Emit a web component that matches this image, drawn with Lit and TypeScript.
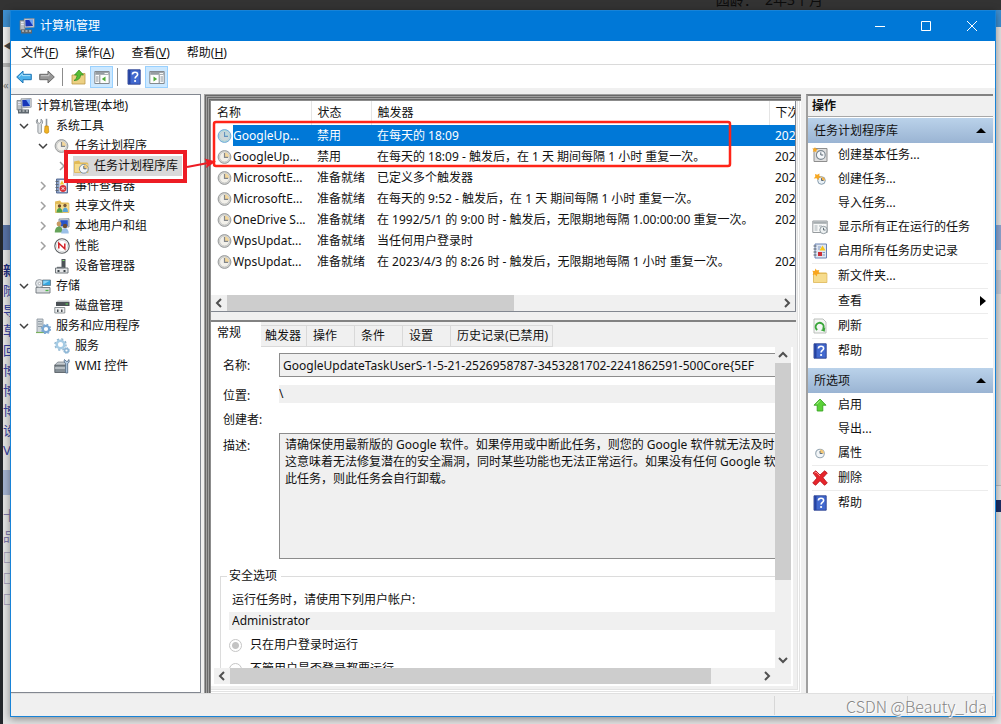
import { LitElement, html, css, svg, nothing, TemplateResult } from "lit";
import { customElement, property, state } from "lit/decorators.js";
import { classMap } from "lit/directives/class-map.js";
import { styleMap } from "lit/directives/style-map.js";

const clockFace = svg`
  <circle cx="7.500" cy="8" r="6.400" fill="#d4d5d4" stroke="#999b9b" stroke-width="1"/>
  <circle cx="7.500" cy="8" r="4.900" fill="#f2f0ea" stroke="#bfc0bd" stroke-width=".7"/>
  <path d="M7.500 8V3.500A4.500 4.500 0 0 1 12 8Z" fill="#f3d79b"/>
  <path d="M7.500 4V8.300h3.600" fill="none" stroke="#83868a" stroke-width="1.200"/>`;

const smallClock = svg`
  <circle cx="10.8" cy="10.8" r="4.4" fill="#f4f6f8" stroke="#7d93a5"/>
  <path d="M10.8 10.8V6.8a4 4 0 0 1 4 4Z" fill="#f5ca74"/>
  <path d="M10.8 8v2.8h2.5" fill="none" stroke="#56687a"/>`;

const star = svg`<path d="M3.5.5l1.3 2.1L7.4 2 6.3 4.2 8 6 5.4 6.1 4.6 8.400 3 6.500.6 7l1-2.300L.2 2.800l2.500.1Z" fill="#f9a51c"/>`;

const folderBody = svg`
  <path d="M1 3.500 6 2.500 7.500 4.500H14.500V14.500L1.500 14.500Z" fill="#e3bb55"/>
  <path d="M1.500 5.500H15V14.500H1.500Z" fill="#f6dc8d" stroke="#d8b04e" stroke-width=".6"/>`;

const ICONS: Record<string, TemplateResult> = {
  computer: svg`
    <path d="M1 2.500h5V12H1Z" fill="#b9bec2" stroke="#6f767c" stroke-width=".7"/>
    <path d="M2 4.500h3M2 6.500h3" stroke="#eef" stroke-width=".8"/>
    <path d="M5 .8 15.200.5V9.200L5.500 9.800Z" fill="#d6dadd" stroke="#7c848c" stroke-width=".7"/>
    <path d="M6.300 1.900 14 1.700V8L6.500 8.500Z" fill="#1736b8"/>
    <path d="M10 1.800 14 1.700V8Z" fill="#6fa4f2"/>
    <path d="M2 11.500h11v4H2Z" fill="#5e676e"/>
    <path d="M3 13h2m1.500 0h2m1.500 0h2" stroke="#e6e9eb"/>`,
  tools: svg`
    <path d="M2.500 1.200v3l1.700 1.300L6 4.200v-3c2 1 2.200 4 .4 5.200V14.500c-.8 1.200-2.800 1.200-3.500 0V6.400C.9 5 1 2 2.500 1.200Z" fill="#dfe2e4" stroke="#7b8287" stroke-width=".8"/>
    <path d="M11.500.800V8" stroke="#8f979d" stroke-width="1.600"/>
    <path d="M10 8h3.200l.6 6c-.5 1.700-3.700 1.700-4.300 0Z" fill="#f0b323" stroke="#c78a13" stroke-width=".7"/>`,
  clock: clockFace,
  folderClock: svg`${folderBody}${smallClock}`,
  event: svg`
    <path d="M2.500 1h11v14h-11Z" fill="#8ba0c4" stroke="#4d638f" stroke-width=".9"/>
    <path d="M5.500 2h7v12h-7Z" fill="#f2f5fa"/>
    <path d="M1.500 3.500h3M1.500 6.500h3M1.500 9.500h3M1.500 12.500h3" stroke="#5f6770"/>
    <path d="M8 2.500l2.200 4H5.800Z" fill="#f5c938"/>
    <circle cx="9" cy="10.500" r="3.400" fill="#d8343a"/><path d="M7.700 9.200l2.600 2.600m0-2.600-2.600 2.600" stroke="#fff"/>`,
  share: svg`${folderBody}
    <circle cx="5.500" cy="8" r="1.700" fill="#6c4a2b"/><path d="M2.500 14.500c0-6 6-6 6 0Z" fill="#4fa04c"/>
    <circle cx="11" cy="7.500" r="1.700" fill="#7a5936"/><path d="M8.500 14c0-6 5.500-6 5.500 0Z" fill="#5aa6d8"/>`,
  users: svg`
    <path d="M5 1 15 .7V9H5Z" fill="#cfd6dc" stroke="#77828d" stroke-width=".8"/><path d="M6.300 2.200h7.500V8H6.300Z" fill="#2855c9"/>
    <circle cx="5" cy="6" r="2.400" fill="#c99a62"/><path d="M.8 14.500c0-8 8.200-8 8.200 0Z" fill="#65a35a"/>
    <circle cx="11" cy="8" r="2.200" fill="#6e4d31"/><path d="M7.200 15.500c0-7.500 7.600-7.500 7.600 0Z" fill="#9cc0e8"/>`,
  perf: svg`
    <circle cx="8" cy="8" r="7.200" fill="#fff" stroke="#5b5f62" stroke-width="1.100"/>
    <circle cx="8" cy="8" r="5.600" fill="none" stroke="#c7cacc" stroke-width=".7"/>
    <path d="M4.800 10.500V5.200l6 5.600V5.500" fill="none" stroke="#d42127" stroke-width="1.500"/>`,
  device: svg`
    <path d="M7.500 1h4v9h-4Z" fill="#4c5357"/><path d="M8.500 2.500h2" stroke="#7ee06d"/>
    <path d="M1.500 10h12.500v5H1.500Z" fill="#e3e5e7" stroke="#666d72" stroke-width=".9"/>
    <path d="M3.500 12h2v2h-2zm6 0h2v2h-2z" fill="#3f464a"/><path d="M3 9.500h7" stroke="#6b7277" stroke-width="1.400"/>`,
  storage: svg`
    <path d="M1 9.500h14V15H1Z" fill="#d9dcde" stroke="#6d757b" stroke-width=".9"/><path d="M10.500 12.500h3" stroke="#50b74b" stroke-width="1.300"/>
    <circle cx="4.500" cy="5.500" r="4" fill="#dfe3e6" stroke="#868d93" stroke-width=".8"/><circle cx="4.500" cy="5.500" r="1.200" fill="#fff" stroke="#868d93" stroke-width=".6"/>
    <path d="M7.500 2h8v5.500h-8Z" fill="#35a5de" stroke="#6b7780" stroke-width=".8"/>
    <path d="M8.300 2.800h6.400L8.300 6.500Z" fill="#8bd4f5"/>`,
  disk: svg`
    <path d="M2 4h13.500v4H2Z" fill="#4b5156"/><path d="M2 4l2-1.500h11.500V4Z" fill="#c3c7ca"/><path d="M11.500 6h2.500" stroke="#62dd58"/>
    <path d="M.8 9.500h10v5.500h-10Z" fill="#eceeef" stroke="#747b80" stroke-width=".8"/><path d="M3 11.500h1.500V14H3zm4 0h1.500V14H7z" fill="#4b5156"/>`,
  services: svg`
    <path d="M2 1h6v13.500H2Z" fill="#d0d6da" stroke="#87919a" stroke-width=".8"/><path d="M3 3.500h4M3 6h4M3 8.500h4" stroke="#8f9ba5"/><path d="M1 14.500h8" stroke="#78b05c" stroke-width="1.200"/>
    <circle cx="11" cy="11" r="3.200" fill="none" stroke="#79a7d3" stroke-width="2.200"/><circle cx="11" cy="11" r="4.600" fill="none" stroke="#79a7d3" stroke-width="1.200" stroke-dasharray="1.800 1.810"/>`,
  gears: svg`
    <circle cx="6.500" cy="6.500" r="3.800" fill="none" stroke="#a5cbe4" stroke-width="2.600"/><circle cx="6.500" cy="6.500" r="5.600" fill="none" stroke="#8db4cf" stroke-width="1.300" stroke-dasharray="2.200 2.200"/>
    <circle cx="12.500" cy="12.500" r="1.900" fill="none" stroke="#8fb7d6" stroke-width="1.600"/><circle cx="12.500" cy="12.500" r="3" fill="none" stroke="#8fb7d6" stroke-dasharray="1.200 1.150"/>`,
  wmi: svg`
    <path d="M.8 7h12v7.500H.8Z" fill="#858f96" stroke="#4e565c" stroke-width=".8"/><path d="M.8 7l3-3h9.500v3Z" fill="#c4cacf" stroke="#5e676d" stroke-width=".6"/><path d="M1 10h10" stroke="#e8ecef"/>
    <path d="M10.500 1.500c-1 2 .2 3.500 1.200 3.900V15h2V5.400c1.400-.4 2-2.200 1.100-3.900l-.9 1.800h-1.600Z" fill="#b9d1e8" stroke="#4c6580" stroke-width=".8"/>`,
  back: svg`<path d="M.7 8 7 2v3.300h8.300v5.400H7V14Z" fill="#4db1ea" stroke="#1f76b6"/><path d="M3 7.800 6.300 4.600v2h8" fill="none" stroke="#a9e0fb"/>`,
  forward: svg`<path d="M15.300 8 9 2v3.300H.7v5.400H9V14Z" fill="#989898" stroke="#6a6a6a"/><path d="M2 6.700h8v-2" fill="none" stroke="#cdcdcd"/>`,
  upFolder: svg`<path d="M1 6h4l1-1.500h8V15H1Z" fill="#ecd083" stroke="#bd9a46" stroke-width=".8"/><path d="M3 11.500c2-1 3-3 3-5.500H3.500L8 1l4.500 5H9.500C9.500 9.500 7 11.500 3 11.500Z" fill="#57bd35" stroke="#2d8a1c" stroke-width=".7"/>`,
  paneLeft: svg`<path d="M.8 2.500h14.400v12H.8Z" fill="#fdfdfd" stroke="#83898e"/><path d="M1.300 3h13.400v2.800H1.300Z" fill="#969da2"/><path d="M10.500 4.400h3.500" stroke="#fff"/><path d="M5.800 6v8.500" stroke="#83898e"/><path d="M2 8h2.500M2 10h2.500M2 12h2.500" stroke="#87939b"/><path d="M11.500 7.500v5L7.800 10Z" fill="#4eab37"/>`,
  paneRight: svg`<path d="M.8 2.500h14.400v12H.8Z" fill="#fdfdfd" stroke="#83898e"/><path d="M1.300 3h13.400v2.800H1.300Z" fill="#969da2"/><path d="M10.500 4.400h3.500" stroke="#fff"/><path d="M10.200 6v8.500" stroke="#83898e"/><path d="M11.500 8h2.500M11.500 10h2.500M11.500 12h2.500" stroke="#87939b"/><path d="M4.500 7.500v5L8.200 10Z" fill="#4eab37"/>`,
  help: svg`<path d="M2 .8h12.200v14.400H2Z" fill="#4269cf" stroke="#2a3f8e" stroke-width=".9"/><path d="M2.500 1h2v14h-2Z" fill="#26439f"/><path d="M6.400 5.600c0-3.300 5.200-3.100 5.200-.2 0 2-2.500 2-2.500 4" fill="none" stroke="#fff" stroke-width="1.600"/><circle cx="9.100" cy="12" r="1.100" fill="#fff"/>`,
  basicTask: svg`<path d="M2 1.500h13v13H2Z" fill="#dedede" stroke="#8e8e8e"/><circle cx="8.800" cy="8" r="4.400" fill="#f6f8fa" stroke="#7b8790" stroke-width="1.100"/><path d="M8.800 5.300V8h2.400" fill="none" stroke="#5b6874"/><path d="M3 0l.8 1.800L6 2.200 4.300 3.500l.2 2L2.800 4.300.8 5l.7-2L.2 1.400l2 .2Z" fill="#f7a823"/>`,
  newTask: svg`<circle cx="9.500" cy="9.500" r="3.800" fill="#e8f0f6" stroke="#7d93a5" stroke-width=".9"/><path d="M9.500 9.500V6a3.500 3.500 0 0 1 3.500 3.500Z" fill="#f1b24b"/><path d="M9.500 7.200v2.300h2" fill="none" stroke="#56687a"/><path d="M3 3l2.200.7L7.500 2.500 7.300 4.800 9.500 6l-2.600.7-.7 2.600-1.700-2-2.700.3 1.500-2.200Z" fill="#f7a823"/>`,
  running: svg`<path d="M.8 2h14.400v11.500H.8Z" fill="#f7f8f8" stroke="#969b9e"/><path d="M1.200 2.500h13.600v2.300H1.200Z" fill="#a7adb0"/><path d="M2.500 7h3M2.500 9h3M2.500 11h3M7 7h3" stroke="#a8b1b6"/><circle cx="11.500" cy="11" r="3.700" fill="#edf1f2" stroke="#889298" stroke-width=".9"/><path d="M11.500 8.800V11h2" fill="none" stroke="#647079"/>`,
  history: svg`<path d="M3 1h11.500v14H3Z" fill="#dfe7f3" stroke="#6a83b3"/><path d="M1.500 3h3M1.500 6h3M1.500 9h3M1.500 12h3" stroke="#596068"/><path d="M6 4h3M6 6h2" stroke="#8298be"/><path d="M10.500 2.500l3 5h-6Z" fill="#f7c71d"/><path d="M6 9h4v4H6Z" fill="#cc3038"/><path d="M10.500 9.500H13M10.500 12H13" stroke="#8298be"/>`,
  newFolder: svg`${folderBody}${star}`,
  refresh: svg`<path d="M2 1h9l3 3v11H2Z" fill="#f4f6f4" stroke="#b3b8b3" stroke-width=".9"/><path d="M5.200 12A4 4 0 1 1 11 11" fill="none" stroke="#3aa63a" stroke-width="2"/><path d="M13.300 9.500l-.6 4.300-4-1.600Z" fill="#3aa63a"/>`,
  up: svg`<path d="M8 2 14 8.200h-3.200V14H5.200V8.200H2Z" fill="#5bd238" stroke="#38a421" stroke-width=".9"/><path d="M4.500 7.300 8 3.600" stroke="#b0f297"/>`,
  props: svg`<circle cx="8" cy="8.500" r="4.300" fill="#f2f5f7" stroke="#98a8b4" stroke-width="1.100"/><path d="M8 8.500V4.500a4 4 0 0 1 4 4Z" fill="#f4c877"/><path d="M8 6v2.500h2.500" fill="none" stroke="#61727f"/>`,
  remove: svg`<path d="M1 3 3.800.8 8 5 12.600.8 15.300 3 11 7.700 15.300 13 12.500 15.300 8 10.700 3.600 15.300.7 13 5 8Z" fill="#e6252b" stroke="#b51219" stroke-width=".8"/><path d="M2.500 3 4 2l4 4" fill="none" stroke="#f78d8d"/>`,
};

const icon = (name: string) =>
  name
    ? html`<svg class="ico" viewBox="0 0 16 16" width="16" height="16" aria-hidden="true">${ICONS[name]}</svg>`
    : html`<span class="ico"></span>`;

const shared = css`
  * { box-sizing: border-box; }
  button, input, textarea, fieldset { font: inherit; color: inherit; margin: 0; border-radius: 0; }
  button { background: none; border: 0; padding: 0; text-align: left; }
  svg { display: block; flex: none; }
  .ico { width: 16px; height: 16px; flex: none; }
`;

const ARROWS: Record<string, string> = {
  left: "M10 4 6 8l4 4",
  right: "M6 4l4 4-4 4",
  up: "M4 10l4-4 4 4",
  down: "M4 6l4 4 4-4",
};
const arrow = (dir: string) => html`
  <svg viewBox="0 0 16 16" width="16" height="16" aria-hidden="true">
    <path d=${ARROWS[dir]} fill="none" stroke="#505050" stroke-width="2"/>
  </svg>`;

@customElement("scroll-bar")
class ScrollBar extends LitElement {
  @property({ type: Boolean, reflect: true }) vertical = false;
  @property({ type: Number }) size = 50;
  static styles = [shared, css`
    :host { display: flex; background: #f0f0f0; height: 16px; min-width: 0; }
    :host([vertical]) { flex-direction: column; height: auto; width: 16px; min-height: 0; }
    .track { flex: 1; min-width: 0; min-height: 0; }
    .thumb { background: #cdcdcd; height: 100%; width: 100%; }
  `];
  render() {
    const pct = `${this.size}%`;
    return html`
      <button aria-label="向前滚动">${arrow(this.vertical ? "up" : "left")}</button>
      <div class="track"><div class="thumb" style=${styleMap(this.vertical ? { height: pct } : { width: pct })}></div></div>
      <button aria-label="向后滚动">${arrow(this.vertical ? "down" : "right")}</button>`;
  }
}

type Node = { level: number; icon: string; text: string; open?: boolean; selected?: boolean };
const TREE: Node[] = [
  { level: 0, icon: "computer", text: "计算机管理(本地)" },
  { level: 1, icon: "tools", text: "系统工具", open: true },
  { level: 2, icon: "clock", text: "任务计划程序", open: true },
  { level: 3, icon: "folderClock", text: "任务计划程序库", open: false, selected: true },
  { level: 2, icon: "event", text: "事件查看器", open: false },
  { level: 2, icon: "share", text: "共享文件夹", open: false },
  { level: 2, icon: "users", text: "本地用户和组", open: false },
  { level: 2, icon: "perf", text: "性能", open: false },
  { level: 2, icon: "device", text: "设备管理器" },
  { level: 1, icon: "storage", text: "存储", open: true },
  { level: 2, icon: "disk", text: "磁盘管理" },
  { level: 1, icon: "services", text: "服务和应用程序", open: true },
  { level: 2, icon: "gears", text: "服务" },
  { level: 2, icon: "wmi", text: "WMI 控件" },
];

@customElement("console-tree")
class ConsoleTree extends LitElement {
  static styles = [shared, css`
    :host { display: block; background: #fff; border: 1px solid #828790; border-left: 0; overflow: hidden; }
    ul { list-style: none; margin: 0; padding: 1px 0 0; }
    li { display: flex; align-items: center; height: 20px; padding-left: 5px; white-space: nowrap; }
    .indent { flex: none; }
    .twist { width: 19px; flex: none; }
    .node { display: flex; align-items: center; gap: 5px; height: 20px; }
    .selected { background: #d9d9d9; padding-right: 4px; }
  `];
  render() {
    return html`<ul role="tree">${TREE.map((n) => html`
      <li role="treeitem" aria-level=${n.level + 1}>
        <span class="indent" style=${styleMap({ width: `${Math.max(0, n.level - 1) * 19}px` })}></span>
        ${n.level ? html`<span class="twist">${n.open === undefined ? nothing : html`
          <svg width="16" height="16" viewBox="0 0 16 16"><path fill="none" stroke-width="1.500"
            stroke=${n.open ? "#404040" : "#a0a0a0"} d=${n.open ? "M4 6l4 4 4-4" : "M6 4l4 4-4 4"}/></svg>`}</span>` : nothing}
        <span class=${classMap({ node: true, selected: !!n.selected })}>${icon(n.icon)}<span>${n.text}</span></span>
      </li>`)}</ul>`;
  }
}

const TASKS = [
  ["GoogleUp...", "禁用", "在每天的 18:09", "2023/4/4"],
  ["GoogleUp...", "禁用", "在每天的 18:09 - 触发后，在 1 天 期间每隔 1 小时 重复一次。", "2023/4/4"],
  ["MicrosoftE...", "准备就绪", "已定义多个触发器", "2023/4/4"],
  ["MicrosoftE...", "准备就绪", "在每天的 9:52 - 触发后，在 1 天 期间每隔 1 小时 重复一次。", "2023/4/4"],
  ["OneDrive S...", "准备就绪", "在 1992/5/1 的 9:00 时 - 触发后，无限期地每隔 1.00:00:00 重复一次。", "2023/4/4"],
  ["WpsUpdat...", "准备就绪", "当任何用户登录时", ""],
  ["WpsUpdat...", "准备就绪", "在 2023/4/3 的 8:26 时 - 触发后，无限期地每隔 1 小时 重复一次。", "2023/4/4"],
];

@customElement("task-list")
class TaskList extends LitElement {
  @state() selected = 0;
  static styles = [shared, css`
    :host { display: flex; flex-direction: column; background: #fff; border-right: 1px solid #828790; border-bottom: 1px solid #828790; height: 211px; }
    .view { flex: 1; min-height: 0; overflow: hidden; }
    table { width: 100%; table-layout: fixed; border-collapse: collapse; }
    .c-name { width: 100px; }
    .c-state { width: 60px; }
    .c-next { width: 26px; }
    th { height: 24px; padding: 0 0 0 6px; font-weight: 400; text-align: left; border-right: 1px solid #e5e5e5; white-space: nowrap; overflow: hidden; }
    th:last-child { border-right: 0; }
    td { height: 21px; padding: 0 0 0 6px; white-space: nowrap; overflow: hidden; }
    .name { display: flex; align-items: center; }
    .name span { flex: 1; line-height: 21px; }
    .on td:not(:first-child), .on .name span { background: #0078d7; color: #fff; }
    .on .ico { filter: sepia(1) hue-rotate(170deg) saturate(1.8) brightness(.85); }
  `];
  render() {
    return html`
      <div class="view"><table>
        <colgroup><col class="c-name"><col class="c-state"><col><col class="c-next"></colgroup>
        <thead><tr><th>名称</th><th>状态</th><th>触发器</th><th>下次运行时间</th></tr></thead>
        <tbody>${TASKS.map((t, i) => html`
          <tr class=${classMap({ on: i === this.selected })} @click=${() => (this.selected = i)}>
            <td><div class="name">${icon("clock")}<span>${t[0]}</span></div></td>
            <td>${t[1]}</td><td>${t[2]}</td><td>${t[3]}</td>
          </tr>`)}</tbody>
      </table></div>
      <scroll-bar .size=${52}></scroll-bar>`;
  }
}

const TABS = ["常规", "触发器", "操作", "条件", "设置", "历史记录(已禁用)"];
const DESCRIPTION = `请确保使用最新版的 Google 软件。如果停用或中断此任务，则您的 Google 软件就无法及时更新，
这意味着无法修复潜在的安全漏洞，同时某些功能也无法正常运行。如果没有任何 Google 软件使用
此任务，则此任务会自行卸载。`;

@customElement("task-detail")
class TaskDetail extends LitElement {
  static styles = [shared, css`
    :host { display: flex; flex-direction: column; background: #f0f0f0; border-top: 2px solid #828282; min-height: 0; overflow: hidden; }
    .tabs { display: flex; align-items: flex-end; height: 25px; flex: none; }
    .tab { height: 22px; min-width: 48px; padding: 0 4px 0 6px; border: 1px solid #d9d9d9; border-left: 0; white-space: nowrap; }
    .tab:nth-child(2) { min-width: 46px; padding: 0 4px; }
    .tab.on { height: 25px; min-width: 50px; background: #fff; border: 0; padding-bottom: 4px; }
    .page { flex: 1; min-height: 0; display: grid; grid-template: minmax(0, 1fr) 16px / minmax(0, 1fr) 16px; background: #fff; margin-right: 3px; padding: 0 2px 2px 3px; }
    .corner { background: #f0f0f0; }
    .view { overflow: hidden; min-height: 0; }
    .canvas { width: calc(100% + 120px); padding: 6px 0 0 6px; }
    .form { display: grid; grid-template-columns: 56px 1fr; row-gap: 8px; padding-left: 3px; line-height: 18px; }
    .form label { height: 14px; padding-top: 2px; }
    .form label[for="name"], .form label[for="desc"] { padding-top: 4px; }
    .form label[for="author"] { padding-top: 0; }
    input[type="text"] { border: 0; background: #f0f0f0; height: 18px; padding: 0 3px; width: 100%; min-width: 0; outline: 0; }
    .form .boxed { height: 24px; border: 1px solid #8c8c8c; }
    .form .flat { padding: 0; }
    .form input.none { background: #fff; height: 14px; }
    textarea { display: block; height: 126px; resize: none; border: 1px solid #8c8c8c; background: #f0f0f0; padding: 2px 5px; line-height: 17px; white-space: pre; overflow: hidden; outline: 0; }
    fieldset { border: 1px solid #dcdcdc; margin: 8px 0 0; padding: 6px 8px 0; line-height: 18px; min-width: 0; }
    legend { padding: 0 4px 0 2px; margin-left: -2px; }
    .account { display: block; padding-left: 3px; margin-bottom: 3px; }
    .radio { display: flex; align-items: center; gap: 8px; height: 24px; margin-top: 3px; }
    .radio + .radio { margin-top: 0; }
    .radio input { appearance: none; width: 13px; height: 13px; margin: 0; border: 1px solid #c6c6c6; border-radius: 50%; background: #fff; }
    .radio input:checked { background: radial-gradient(circle, #c4c4c4 3px, #fff 4px); }
  `];
  render() {
    return html`
      <div class="tabs" role="tablist">${TABS.map((t, i) => html`
        <button role="tab" aria-selected=${i === 0} class=${classMap({ tab: true, on: i === 0 })}>${t}</button>`)}</div>
      <div class="page">
        <div class="view"><div class="canvas">
          <div class="form">
            <label for="name">名称:</label>
            <input class="boxed" id="name" type="text" readonly value="GoogleUpdateTaskUserS-1-5-21-2526958787-3453281702-2241862591-500Core{5EF">
            <label for="place">位置:</label><input class="flat" id="place" type="text" readonly value="\\">
            <label for="author">创建者:</label><input class="none" id="author" type="text" readonly>
            <label for="desc">描述:</label><textarea id="desc" readonly .value=${DESCRIPTION}></textarea>
          </div>
          <fieldset>
            <legend>安全选项</legend>
            <label class="account" for="account">运行任务时，请使用下列用户帐户:</label>
            <input id="account" type="text" readonly value="Administrator">
            <label class="radio"><input type="radio" name="run" checked>只在用户登录时运行</label>
            <label class="radio"><input type="radio" name="run">不管用户是否登录都要运行</label>
          </fieldset>
        </div></div>
        <scroll-bar vertical .size=${75}></scroll-bar>
        <scroll-bar .size=${91}></scroll-bar>
        <div class="corner"></div>
      </div>`;
  }
}

type Action = { icon?: string; text: string; sep?: boolean; more?: boolean };
const SECTIONS: { title: string; items: Action[] }[] = [
  { title: "任务计划程序库", items: [
    { icon: "basicTask", text: "创建基本任务..." },
    { icon: "newTask", text: "创建任务..." },
    { text: "导入任务..." },
    { icon: "running", text: "显示所有正在运行的任务" },
    { icon: "history", text: "启用所有任务历史记录" },
    { icon: "newFolder", text: "新文件夹...", sep: true },
    { text: "查看", sep: true, more: true },
    { icon: "refresh", text: "刷新", sep: true },
    { icon: "help", text: "帮助", sep: true },
  ] },
  { title: "所选项", items: [
    { icon: "up", text: "启用" },
    { text: "导出..." },
    { icon: "props", text: "属性" },
    { icon: "remove", text: "删除", sep: true },
    { icon: "help", text: "帮助", sep: true },
  ] },
];

@customElement("action-pane")
class ActionPane extends LitElement {
  static styles = [shared, css`
    :host { display: block; background: #fff; border-left: 2px solid #a0a0a0; border-top: 2px solid #828282; overflow: hidden; }
    h2, h3 { margin: 0; font-size: 12px; display: flex; align-items: center; }
    h2 { height: 21px; padding-left: 4px; background: #f0f0f0; border-bottom: 1px solid #a8a8a8; font-weight: 700; }
    h3 { height: 25px; padding: 0 7px 0 6px; margin-top: 1px; justify-content: space-between; font-weight: 400; background: linear-gradient(#bad2ea, #9ab4d3); }
    section + section { margin-top: 5px; }
    ul { list-style: none; margin: 0; padding: 0 5px 0 4px; }
    .sep { border-top: 1px solid #ececec; }
    button { display: flex; align-items: center; gap: 10px; width: 100%; height: 24px; white-space: nowrap; }
    button span { flex: 1; }
    button .ico { flex: none; }
    .more { margin-right: 2px; }
  `];
  render() {
    return html`<h2>操作</h2>${SECTIONS.map((s) => html`
      <section>
        <h3>${s.title}<svg width="10" height="5" viewBox="0 0 10 5"><path d="M0 5 5 0l5 5Z"/></svg></h3>
        <ul>${s.items.map((a) => html`<li class=${classMap({ sep: !!a.sep })}>
          <button>${icon(a.icon ?? "")}<span>${a.text}</span>
            ${a.more ? html`<svg class="more" width="6" height="10" viewBox="0 0 6 10"><path d="M0 0l6 5-6 5Z"/></svg>` : nothing}
          </button></li>`)}</ul>
      </section>`)}`;
  }
}

const MENUS = [["文件", "F"], ["操作", "A"], ["查看", "V"], ["帮助", "H"]];

@customElement("app-root")
class AppRoot extends LitElement {
  static styles = [shared, css`
    :host {
      display: flex; flex-direction: column; position: relative; box-sizing: border-box; height: 100vh; overflow: hidden;
      padding: 10px 5px 7px 10px; background: #e3e3e3; color: #111;
      font: 12px/16px "Noto Sans", "Noto Sans CJK SC", sans-serif;
    }
    .behind { position: absolute; inset: 0; display: flex; flex-direction: column; }
    .strip { height: 10px; background: #333; flex: none; display: flex; justify-content: flex-end; overflow: hidden; color: #0c0c0c; font-size: 14px; line-height: 0; padding-right: 178px; white-space: pre; }
    .sides { flex: 1; display: flex; justify-content: space-between; min-height: 0; }
    .left { width: 11px; border-left: 3px solid #24272b; overflow: hidden; color: #3540a0; white-space: nowrap; font-size: 13px; line-height: 20px; }
    .left div, .right div { overflow: hidden; }
    .tabtop { height: 17px; background: #3f8fd0; }
    .nav { height: 40px; background: #efefef; border-bottom: 4px solid #b4b4b4; color: #444; padding-top: 8px; }
    .quote { height: 158px; padding-top: 8px; color: #777; font-size: 11px; }
    .band { height: 25px; background: #5872a4; }
    .links { height: 220px; padding-top: 10px; }
    .links b { color: #1c2c80; }
    .light { height: 25px; background: #a4b3d2; }
    .glyphs { padding-top: 10px; color: #7f78a8; line-height: 21px; }
    .right { width: 6px; overflow: hidden; }
    .r1 { height: 198px; }
    .r2 { height: 25px; background: #8ea5cf; }
    .r3 { height: 20px; }
    .r4 { height: 24px; background: #c3cad6; }
    .r5 { height: 192px; border-bottom: 1px solid #bbb; background: #dcdcdc; }
    .r6 { height: 12px; background: #1c2f66; margin-top: 14px; }
    .window { position: relative; flex: 1; display: flex; flex-direction: column; background: #f0f0f0; border: 1px solid #1883d7; box-shadow: 0 2px 8px rgba(0, 0, 0, .4); min-height: 0; }
    .title { height: 30px; background: #0078d7; color: #fff; display: flex; align-items: center; padding-left: 8px; flex: none; }
    .title h1 { flex: 1; margin: 0; padding-left: 5px; font-size: 12px; font-weight: 400; }
    .title button { width: 46px; height: 30px; display: grid; place-items: center; }
    .menu { display: flex; gap: 17px; height: 24px; padding-left: 10px; background: #fff; border-bottom: 1px solid #dadada; flex: none; }
    .tools { display: flex; align-items: center; height: 23px; background: #fff; padding-left: 1px; flex: none; }
    .tools button { height: 22px; width: 23px; display: grid; place-items: center; border: 1px solid transparent; }
    .tools .on { background: #cce8ff; border-color: #99d1ff; }
    .tools i { width: 1px; height: 18px; background: #8c8c8c; margin: 0 4px; }
    .body { flex: 1; min-height: 0; display: grid; grid-template: minmax(0, 1fr) / 190px minmax(0, 1fr) 187px; column-gap: 3px; padding: 6px 2px 0 0; }
    .center {
      display: grid; grid-template-rows: auto minmax(0, 1fr); row-gap: 8px; min-height: 0; min-width: 0;
      margin-right: 2px; padding: 7px 5px 7px 7px; background: #f0f0f0;
      box-shadow: inset 1px 1px #a0a0a0, inset 2px 2px #696969, inset 3px 3px #a0a0a0, inset 4px 4px #696969, inset 5px 5px #a0a0a0, inset 6px 6px #696969, inset 7px 7px #8c8c8c,
        inset -1px -1px #fff, inset -2px -2px #e3e3e3, inset -3px -3px #fff, inset -4px -4px #e3e3e3;
    }
    .status { display: flex; justify-content: flex-end; height: 23px; padding: 2px 2px 1px 0; border-top: 1px solid #e0e0e0; flex: none; }
    .status span { border-left: 1px solid #d7d7d7; width: 133px; }
    .status span + span { width: 86px; border-right: 1px solid #d7d7d7; }
    .notes { position: absolute; left: 0; top: 0; width: 100%; height: 100%; pointer-events: none; overflow: visible; }
    .mark { position: absolute; right: 14px; bottom: 6px; color: #858585; font: 300 16px/24px "Noto Sans CJK SC", sans-serif; text-shadow: 1px 1px #fff; }
  `];
  render() {
    return html`
      <div class="behind" aria-hidden="true">
        <div class="strip">园龄：  2年3个月</div>
        <div class="sides">
          <div class="left">
            <div class="tabtop"></div><div class="nav">◀</div><div class="quote">«</div><div class="band"></div>
            <div class="links"><b>新</b><br>随<br>导<br>草<br>回<br>博<br>博<br>博<br>设<br>V</div>
            <div class="light"></div><div class="glyphs">十<br>品<br>□<br>□<br>□</div>
          </div>
          <div class="right">
            <div class="tabtop"></div><div class="r1"></div><div class="r2"></div><div class="r3"></div>
            <div class="r4"></div><div class="r5"></div><div class="r6"></div>
          </div>
        </div>
      </div>
      <main class="window">
        <header class="title">
          ${icon("computer")}<h1>计算机管理</h1>
          <button aria-label="最小化"><svg width="10" height="10"><path d="M0 5.500h10" stroke="#fff"/></svg></button>
          <button aria-label="最大化"><svg width="10" height="10"><path d="M.5.500h9v9h-9Z" stroke="#fff" fill="none"/></svg></button>
          <button aria-label="关闭"><svg width="10" height="10"><path d="M0 0l10 10M10 0 0 10" stroke="#fff"/></svg></button>
        </header>
        <nav class="menu">${MENUS.map(([t, k]) => html`<button>${t}(<u>${k}</u>)</button>`)}</nav>
        <div class="tools">
          <button aria-label="后退">${icon("back")}</button><button aria-label="前进">${icon("forward")}</button><i></i>
          <button aria-label="上一级">${icon("upFolder")}</button><button class="on" aria-label="控制台树">${icon("paneLeft")}</button><i></i>
          <button aria-label="帮助">${icon("help")}</button><button class="on" aria-label="操作窗格">${icon("paneRight")}</button>
        </div>
        <div class="body">
          <console-tree></console-tree>
          <div class="center"><task-list></task-list><task-detail></task-detail></div>
          <action-pane></action-pane>
        </div>
        <footer class="status"><span></span><span></span></footer>
        <svg class="notes" aria-hidden="true">
          <rect x="55" y="141" width="119" height="29" fill="none" stroke="#ed1c24" stroke-width="4"/>
          <path d="M176 156 197 152" stroke="#ed1c24" stroke-width="2"/>
          <path d="M205 150.500 193.500 147.500 196 152 195 157Z" fill="#ed1c24"/>
          <rect x="203" y="111" width="516" height="44" rx="2" fill="none" stroke="#ff2418" stroke-width="2.500"/>
        </svg>
      </main>
      <div class="mark">CSDN @Beauty_Ida</div>`;
  }
}
